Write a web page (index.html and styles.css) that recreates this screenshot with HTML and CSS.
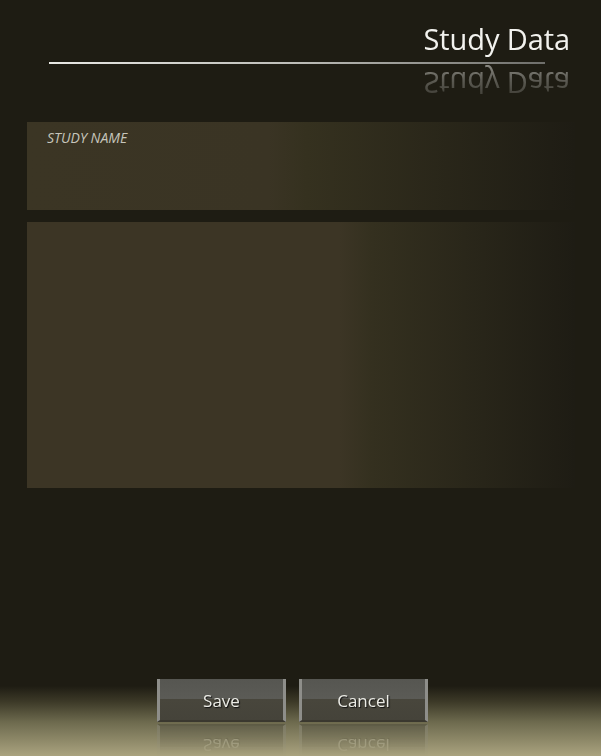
FILE: index.html
```html
<!DOCTYPE html>
<html lang="en">
<head>
<meta charset="utf-8">
<title>Study Data</title>
<link rel="stylesheet" href="styles.css">
</head>
<body>
<div class="screen">
  <header class="header">
    <h1 class="title">Study Data</h1>
    <div class="rule"></div>
  </header>
  <section class="panel panel-name">
    <label class="label">STUDY NAME</label>
  </section>
  <section class="panel panel-body"></section>
  <div class="spacer"></div>
  <footer class="actions">
    <button class="btn">Save</button>
    <button class="btn">Cancel</button>
  </footer>
</div>
</body>
</html>
```
FILE: styles.css
```css
html, body {
  margin: 0;
  padding: 0;
  height: 100%;
}
body {
  background: linear-gradient(to bottom, #1e1c13 0, #1e1c13 686px, #3d3a28 702px, #6d6a4e 722px, #aaa37f 756px);
  font-family: "Open Sans", "Noto Sans", sans-serif;
  overflow: hidden;
}
.screen {
  height: 756px;
  display: flex;
  flex-direction: column;
}
.header {
  display: flex;
  flex-direction: column;
  padding: 21px 31px 0 49px;
}
.title {
  margin: 0;
  align-self: flex-end;
  font-weight: 400;
  font-size: 29px;
  line-height: 36px;
  color: #f2f2ee;
  letter-spacing: -0.1px;
  -webkit-box-reflect: below 8px linear-gradient(to bottom, rgba(0,0,0,0.12) 0%, rgba(0,0,0,0.3) 60%, rgba(0,0,0,0.5) 100%);
}
.rule {
  margin-top: 5px;
  margin-right: 25px;
  height: 2px;
  background: linear-gradient(to right, #e8e8e4 0%, #bdbdb8 50%, #6e6e6a 100%);
}
.panel {
  margin: 0 26px 0 27px;
}
.panel-name {
  margin-top: 58px;
  height: 88px;
  padding: 7px 20px;
  box-sizing: border-box;
  background: linear-gradient(to right, #3b3524 0%, #3a3424 44%, #35311f 51%, #1e1c14 100%);
}
.label {
  display: block;
  font-style: italic;
  font-size: 14px;
  line-height: 18px;
  color: #c6c5bb;
  letter-spacing: 0;
}
.panel-body {
  margin-top: 12px;
  height: 266px;
  background: linear-gradient(to right, #3c3525 0%, #3c3525 57%, #34301f 63%, #1e1c14 100%);
}
.spacer {
  flex: 1;
}
.actions {
  display: flex;
  justify-content: center;
  gap: 13px;
  padding: 0 16px 34px 0;
}
.btn {
  width: 129px;
  height: 43px;
  padding: 2px 0 0 0;
  border: none;
  border-left: 3px solid #8e8e8a;
  border-right: 3px solid #8e8e8a;
  border-bottom: 2px solid #3a382f;
  background: linear-gradient(to bottom, #565651 0%, #5b5b56 48%, #48463c 50%, #45433a 100%);
  color: #ececE6;
  font-family: "Open Sans", "Noto Sans", sans-serif;
  font-size: 17px;
  text-shadow: 1px 1px 1px #111;
  -webkit-box-reflect: below 2px linear-gradient(to bottom, transparent 25%, rgba(0,0,0,0.35) 100%);
}
```
